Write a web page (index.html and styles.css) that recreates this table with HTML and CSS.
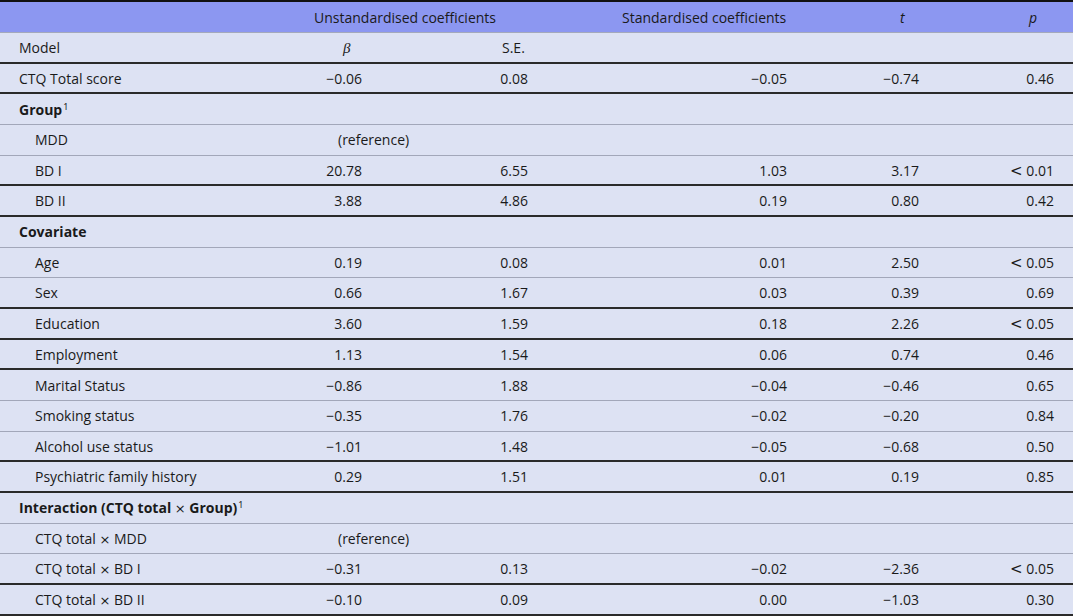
FILE: index.html
```html
<!DOCTYPE html>
<html lang="en">
<head>
<meta charset="utf-8">
<title>Regression table</title>
<link rel="stylesheet" href="styles.css">
</head>
<body>
<table class="tbl">
  <colgroup>
    <col class="w-lab"><col class="w-b"><col class="w-se"><col class="w-st"><col class="w-t"><col class="w-p">
  </colgroup>
  <thead>
    <tr class="hd">
      <th></th>
      <th colspan="2" class="h-un">Unstandardised coefficients</th>
      <th class="h-st">Standardised coefficients</th>
      <th class="h-t"><i>t</i></th>
      <th class="h-p"><i>p</i></th>
    </tr>
  </thead>
  <tbody>
    <tr class="dk"><td class="lab">Model</td><td class="h-b"><i class="beta">β</i></td><td class="h-se">S.E.</td><td></td><td></td><td></td></tr>
    <tr class="dk"><td class="lab">CTQ Total score</td><td class="n b">−0.06</td><td class="n se">0.08</td><td class="n st">−0.05</td><td class="n t">−0.74</td><td class="n p">0.46</td></tr>
    <tr class="lt"><td class="lab grp">Group<sup>1</sup></td><td></td><td></td><td></td><td></td><td></td></tr>
    <tr class="lt"><td class="lab ind">MDD</td><td class="ref">(reference)</td><td></td><td></td><td></td><td></td></tr>
    <tr class="dk"><td class="lab ind">BD I</td><td class="n b">20.78</td><td class="n se">6.55</td><td class="n st">1.03</td><td class="n t">3.17</td><td class="n p"><span class="lt-sign">&lt;</span> 0.01</td></tr>
    <tr class="dk"><td class="lab ind">BD II</td><td class="n b">3.88</td><td class="n se">4.86</td><td class="n st">0.19</td><td class="n t">0.80</td><td class="n p">0.42</td></tr>
    <tr class="lt"><td class="lab grp">Covariate</td><td></td><td></td><td></td><td></td><td></td></tr>
    <tr class="lt"><td class="lab ind">Age</td><td class="n b">0.19</td><td class="n se">0.08</td><td class="n st">0.01</td><td class="n t">2.50</td><td class="n p"><span class="lt-sign">&lt;</span> 0.05</td></tr>
    <tr class="dk"><td class="lab ind">Sex</td><td class="n b">0.66</td><td class="n se">1.67</td><td class="n st">0.03</td><td class="n t">0.39</td><td class="n p">0.69</td></tr>
    <tr class="dk"><td class="lab ind">Education</td><td class="n b">3.60</td><td class="n se">1.59</td><td class="n st">0.18</td><td class="n t">2.26</td><td class="n p"><span class="lt-sign">&lt;</span> 0.05</td></tr>
    <tr class="dk"><td class="lab ind">Employment</td><td class="n b">1.13</td><td class="n se">1.54</td><td class="n st">0.06</td><td class="n t">0.74</td><td class="n p">0.46</td></tr>
    <tr class="lt"><td class="lab ind">Marital Status</td><td class="n b">−0.86</td><td class="n se">1.88</td><td class="n st">−0.04</td><td class="n t">−0.46</td><td class="n p">0.65</td></tr>
    <tr class="lt"><td class="lab ind">Smoking status</td><td class="n b">−0.35</td><td class="n se">1.76</td><td class="n st">−0.02</td><td class="n t">−0.20</td><td class="n p">0.84</td></tr>
    <tr class="dk"><td class="lab ind">Alcohol use status</td><td class="n b">−1.01</td><td class="n se">1.48</td><td class="n st">−0.05</td><td class="n t">−0.68</td><td class="n p">0.50</td></tr>
    <tr class="dk"><td class="lab ind">Psychiatric family history</td><td class="n b">0.29</td><td class="n se">1.51</td><td class="n st">0.01</td><td class="n t">0.19</td><td class="n p">0.85</td></tr>
    <tr class="lt"><td class="lab grp">Interaction (CTQ total <span class="x">×</span> Group)<sup>1</sup></td><td></td><td></td><td></td><td></td><td></td></tr>
    <tr class="lt"><td class="lab ind">CTQ total <span class="x">×</span> MDD</td><td class="ref">(reference)</td><td></td><td></td><td></td><td></td></tr>
    <tr class="dk"><td class="lab ind">CTQ total <span class="x">×</span> BD I</td><td class="n b">−0.31</td><td class="n se">0.13</td><td class="n st">−0.02</td><td class="n t">−2.36</td><td class="n p"><span class="lt-sign">&lt;</span> 0.05</td></tr>
    <tr class="dk"><td class="lab ind">CTQ total <span class="x">×</span> BD II</td><td class="n b">−0.10</td><td class="n se">0.09</td><td class="n st">0.00</td><td class="n t">−1.03</td><td class="n p">0.30</td></tr>
  </tbody>
</table>
</body>
</html>
```
FILE: styles.css
```css
html, body {
  margin: 0;
  background: #ffffff;
}
body {
  font-family: "Open Sans", "Noto Sans", "DejaVu Sans", sans-serif;
  font-size: 14px;
  color: #1a1a1a;
}
.tbl {
  width: 1073px;
  table-layout: fixed;
  border-collapse: separate;
  border-spacing: 0;
  background: #dde2f3;
  border-top: 2px solid #111111;
}
.w-lab { width: 310px; }
.w-b { width: 170px; }
.w-se { width: 120px; }
.w-st { width: 240px; }
.w-t { width: 140px; }
.w-p { width: 93px; }

.tbl th, .tbl td {
  box-sizing: border-box;
  padding: 0;
  white-space: nowrap;
  text-align: left;
  vertical-align: middle;
  font-weight: 400;
}
.tbl th {
  height: 31px;
  background: #8c97f1;
  border-bottom: 1px solid #a4a9bb;
}
.tbl td {
  height: 30.68px;
}
.tbl tr.lt td { border-bottom: 1px solid #a2a7b9; }
.tbl tr.dk td { border-bottom: 2px solid #2a2a2a; }

.h-un { padding-left: 4px !important; }
.h-st { padding-left: 22px !important; }
.h-t { padding-left: 60px !important; }
.h-p { padding-left: 49px !important; }
.h-b { padding-left: 33px !important; }
.h-se { padding-left: 22px !important; }
.beta {
  font-family: "Liberation Serif", "DejaVu Serif", serif;
  font-size: 15px;
}

.lab { padding-left: 19px !important; }
.lab.ind { padding-left: 35px !important; }
.lab.grp { font-weight: 700; }
.lab sup {
  font-family: "Noto Sans", sans-serif;
  font-size: 9px;
  font-weight: 400;
  vertical-align: 5px;
  line-height: 0;
  margin-left: 1px;
}
.x { font-weight: 400; font-family: "DejaVu Sans", sans-serif; font-size: 13px; }
.lt-sign { font-family: "DejaVu Sans", sans-serif; font-size: 15px; }

.n { text-align: right !important; }
.n.b { padding-right: 118px !important; }
.n.se { padding-right: 72px !important; }
.n.st { padding-right: 53px !important; }
.n.t { padding-right: 61px !important; }
.n.p { padding-right: 19px !important; }
.ref { padding-left: 28px !important; }
```
